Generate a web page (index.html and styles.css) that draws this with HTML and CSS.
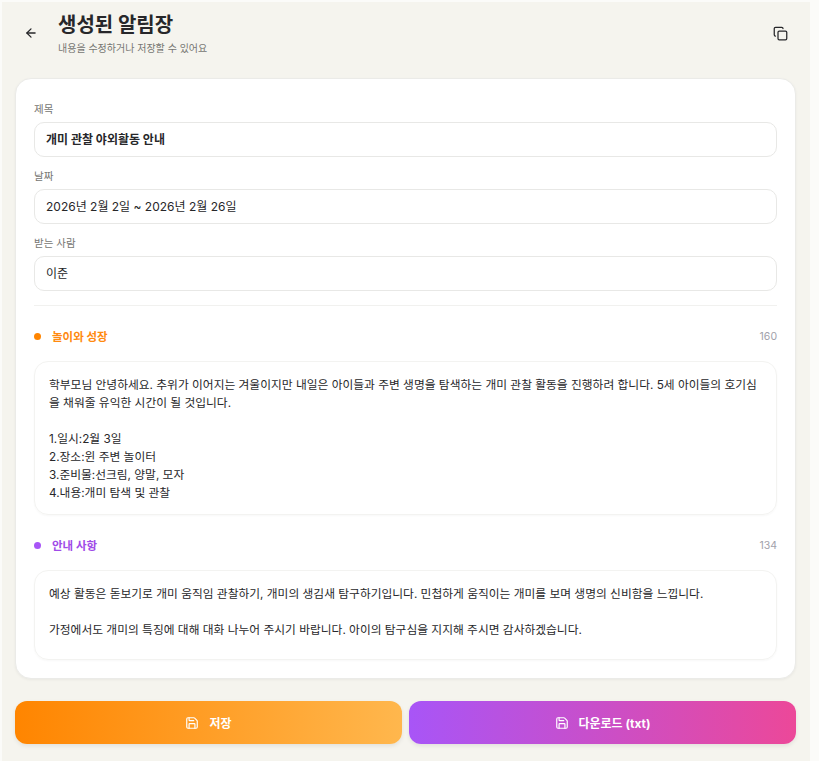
FILE: index.html
```html
<!DOCTYPE html>
<html lang="ko">
<head>
    <meta charset="UTF-8">
    <meta name="viewport" content="width=device-width, initial-scale=1.0">
    <title>생성된 알림장</title>
    <link rel="stylesheet" href="styles.css">
</head>
<body>
    <div class="app">
        <header class="header">
            <button class="icon-btn back-btn" aria-label="뒤로">
                <svg width="14" height="14" viewBox="0 0 24 24" fill="none" stroke="currentColor" stroke-width="2.2" stroke-linecap="round" stroke-linejoin="round"><path d="M12 19l-7-7 7-7"/><path d="M19 12H5"/></svg>
            </button>
            <div class="header-text">
                <h1>생성된 알림장</h1>
                <p>내용을 수정하거나 저장할 수 있어요</p>
            </div>
            <button class="icon-btn copy-btn" aria-label="복사">
                <svg width="15" height="15" viewBox="0 0 24 24" fill="none" stroke="currentColor" stroke-width="2" stroke-linecap="round" stroke-linejoin="round"><rect x="8" y="8" width="14" height="14" rx="2"/><path d="M4 16c-1.1 0-2-.9-2-2V4c0-1.1.9-2 2-2h10c1.1 0 2 .9 2 2"/></svg>
            </button>
        </header>

        <main class="card">
            <div class="field">
                <label>제목</label>
                <div class="input input-bold">개미 관찰 야외활동 안내</div>
            </div>
            <div class="field">
                <label>날짜</label>
                <div class="input">2026년 2월 2일 ~ 2026년 2월 26일</div>
            </div>
            <div class="field">
                <label>받는 사람</label>
                <div class="input">이준</div>
            </div>

            <hr class="divider">

            <section class="section">
                <div class="section-head">
                    <span class="dot dot-orange"></span>
                    <span class="section-title title-orange">놀이와 성장</span>
                    <span class="count">160</span>
                </div>
                <div class="text-box">학부모님 안녕하세요. 추위가 이어지는 겨울이지만 내일은 아이들과 주변 생명을 탐색하는 개미 관찰 활동을 진행하려 합니다. 5세 아이들의 호기심을 채워줄 유익한 시간이 될 것입니다.

1.일시:2월 3일
2.장소:윈 주변 놀이터
3.준비물:선크림, 양말, 모자
4.내용:개미 탐색 및 관찰</div>
            </section>

            <section class="section">
                <div class="section-head">
                    <span class="dot dot-purple"></span>
                    <span class="section-title title-purple">안내 사항</span>
                    <span class="count">134</span>
                </div>
                <div class="text-box text-box-last">예상 활동은 돋보기로 개미 움직임 관찰하기, 개미의 생김새 탐구하기입니다. 민첩하게 움직이는 개미를 보며 생명의 신비함을 느낍니다.

가정에서도 개미의 특징에 대해 대화 나누어 주시기 바랍니다. 아이의 탐구심을 지지해 주시면 감사하겠습니다.</div>
            </section>
        </main>

        <footer class="actions">
            <button class="action action-save">
                <svg width="14" height="14" viewBox="0 0 24 24" fill="none" stroke="currentColor" stroke-width="2" stroke-linecap="round" stroke-linejoin="round"><path d="M15.2 3a2 2 0 0 1 1.4.6l3.8 3.8a2 2 0 0 1 .6 1.4V19a2 2 0 0 1-2 2H5a2 2 0 0 1-2-2V5a2 2 0 0 1 2-2z"/><path d="M17 21v-7a1 1 0 0 0-1-1H8a1 1 0 0 0-1 1v7"/><path d="M7 3v4a1 1 0 0 0 1 1h7"/></svg>
                저장
            </button>
            <button class="action action-download">
                <svg width="14" height="14" viewBox="0 0 24 24" fill="none" stroke="currentColor" stroke-width="2" stroke-linecap="round" stroke-linejoin="round"><path d="M15.2 3a2 2 0 0 1 1.4.6l3.8 3.8a2 2 0 0 1 .6 1.4V19a2 2 0 0 1-2 2H5a2 2 0 0 1-2-2V5a2 2 0 0 1 2-2z"/><path d="M17 21v-7a1 1 0 0 0-1-1H8a1 1 0 0 0-1 1v7"/><path d="M7 3v4a1 1 0 0 0 1 1h7"/></svg>
                다운로드 (txt)
            </button>
        </footer>
    </div>
</body>
</html>
```

FILE: styles.css
```css
:root {
    --page-bg: #f5f4ee;
    --line: #ebebe8;
    --text: #27272a;
    --muted: #767672;
}

html, body {
    height: 100%;
}

body {
    margin: 0;
    background: #fbfbf9;
    font-family: Inter, "Noto Sans CJK KR", sans-serif;
    color: var(--text);
    overflow: hidden;
}

.app {
    box-sizing: border-box;
    width: 808px;
    height: 759px;
    margin: 2px 0 0 2px;
    padding: 0 14px 0 13px;
    background: var(--page-bg);
}

.header {
    display: flex;
    align-items: flex-start;
    height: 76px;
}

.icon-btn {
    display: flex;
    align-items: center;
    justify-content: center;
    padding: 0;
    border: none;
    background: none;
    color: #27272a;
    cursor: pointer;
}

.back-btn {
    width: 30px;
    height: 30px;
    margin: 16px 12px 0 1px;
}

.copy-btn {
    width: 30px;
    height: 30px;
    margin: 16px 1px 0 auto;
}

.header-text {
    padding-top: 9px;
}

.header-text h1 {
    margin: 0;
    font-size: 20px;
    line-height: 28px;
    font-weight: 700;
}

.header-text p {
    margin: 2px 0 0;
    font-size: 10px;
    line-height: 15px;
    color: var(--muted);
}

.card {
    box-sizing: border-box;
    height: 601px;
    padding: 23px 18px 18px;
    background: #fff;
    border: 1px solid var(--line);
    border-radius: 16px;
    box-shadow: 0 1px 3px rgba(0, 0, 0, 0.05);
}

.field {
    margin-bottom: 12px;
}

.field label {
    display: block;
    margin-bottom: 5px;
    font-size: 10.5px;
    line-height: 15px;
    color: var(--muted);
}

.input {
    box-sizing: border-box;
    height: 35px;
    padding: 0 11px;
    border: 1px solid #e8e8e6;
    border-radius: 10px;
    font-size: 12px;
    line-height: 33px;
}

.input-bold {
    font-weight: 700;
}

.divider {
    height: 1px;
    margin: 14px 0 0;
    border: none;
    background: #f1f1ef;
}

.section-head {
    display: flex;
    align-items: center;
    height: 18px;
    margin: 21px 0 16px;
}

.dot {
    width: 7px;
    height: 7px;
    margin-right: 11px;
    border-radius: 50%;
}

.dot-orange { background: #ff8500; }
.dot-purple { background: #a855f7; }

.section-title {
    font-size: 11.5px;
    font-weight: 700;
}

.title-orange { color: #ff8a0f; }
.title-purple { color: #9f4be8; }

.count {
    margin-left: auto;
    font-size: 10.5px;
    color: #a1a1aa;
}

.text-box {
    padding: 14px 14px 12px;
    border: 1px solid #f3f3f1;
    border-radius: 14px;
    box-shadow: 0 1px 2px rgba(0, 0, 0, 0.03);
    font-size: 11.75px;
    line-height: 18px;
    white-space: pre-wrap;
}

.text-box-last {
    padding-bottom: 20px;
}

.actions {
    display: flex;
    gap: 7px;
    margin-top: 22px;
}

.action {
    flex: 1;
    display: flex;
    align-items: center;
    justify-content: center;
    gap: 10px;
    height: 43px;
    border: none;
    border-radius: 12px;
    color: #fff;
    font-family: inherit;
    font-size: 12px;
    font-weight: 700;
    box-shadow: 0 2px 4px rgba(0, 0, 0, 0.08);
    cursor: pointer;
}

.action-save {
    background: linear-gradient(90deg, #ff8500, #ffb74d);
}

.action-download {
    background: linear-gradient(90deg, #a855f7, #ec4899);
}
```
